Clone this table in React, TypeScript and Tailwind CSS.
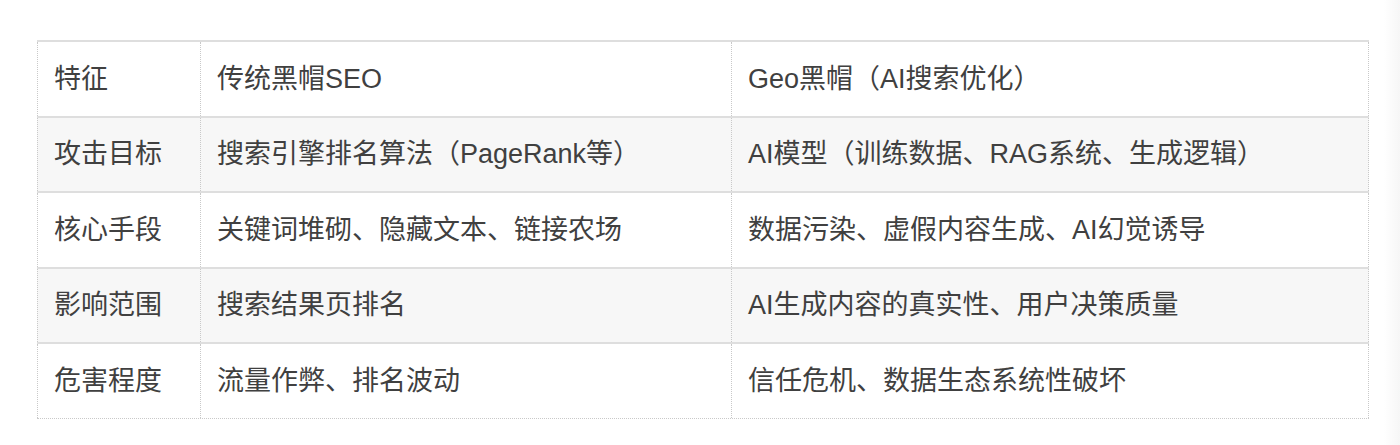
import React from "react";

const rows: string[][] = [
  ["特征", "传统黑帽SEO", "Geo黑帽（AI搜索优化）"],
  ["攻击目标", "搜索引擎排名算法（PageRank等）", "AI模型（训练数据、RAG系统、生成逻辑）"],
  ["核心手段", "关键词堆砌、隐藏文本、链接农场", "数据污染、虚假内容生成、AI幻觉诱导"],
  ["影响范围", "搜索结果页排名", "AI生成内容的真实性、用户决策质量"],
  ["危害程度", "流量作弊、排名波动", "信任危机、数据生态系统性破坏"],
];

export default function App() {
  return (
    <div
      className="relative w-[1400px] h-[445px] bg-white overflow-hidden"
      style={{ fontFamily: '"Liberation Sans", "Noto Sans CJK SC", sans-serif' }}
    >
      <div className="pt-[40px] pl-[37px]">
        <div className="w-[1332px] border-t-2 border-[#dedede]">
          {rows.map((r, i) => (
            <div
              key={i}
              className={`grid grid-cols-[163px_531px_638px] ${i > 0 ? "border-t-2 border-solid border-[#dedede]" : ""} ${i % 2 === 1 ? "bg-[#f7f7f7]" : "bg-white"}`}
            >
              {r.map((c, j) => (
                <div
                  key={j}
                  className={`${i % 2 === 0 ? "h-[74px]" : "h-[73px]"} flex items-center pl-[16px] text-[27px] text-[#404040] border-l border-dotted border-[#c9c9c9] ${j === 2 ? "border-r" : ""}`}
                >
                  {c}
                </div>
              ))}
            </div>
          ))}
          <div className="border-t border-dotted border-[#c9c9c9]" />
        </div>
      </div>
      <div className="absolute top-0 right-0 h-full w-[16px] bg-gradient-to-r from-white to-[#f6f6f6]" />
    </div>
  );
}
